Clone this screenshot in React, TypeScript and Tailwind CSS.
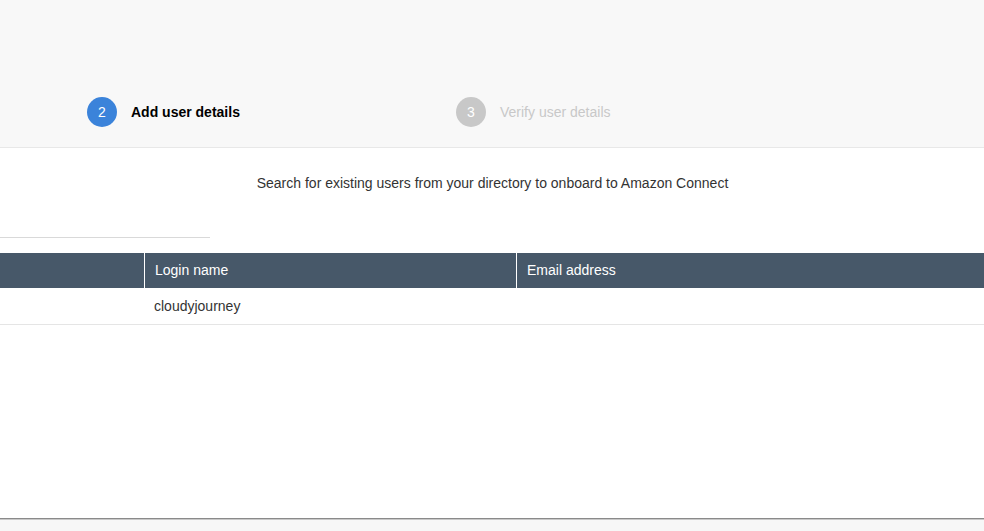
import React from 'react';

const steps = [
  { n: 2, label: 'Add user details', active: true },
  { n: 3, label: 'Verify user details', active: false },
];

export default function App() {
  return (
    <div className="flex h-[531px] w-[984px] flex-col overflow-hidden bg-white font-['Liberation_Sans',Arial,sans-serif] text-[14px]">
      {/* Wizard steps */}
      <div className="h-[148px] shrink-0 border-b border-[#e8e8e8] bg-[#f8f8f8] pt-[97px] pl-[87px]">
        <div className="flex items-center">
          {steps.map(s => (
            <div key={s.n} className={`flex items-center ${s.active ? 'w-[369px]' : ''}`}>
              <div
                className={`flex h-[30px] w-[30px] items-center justify-center rounded-full text-[14px] text-white ${s.active ? 'bg-[#3b83da]' : 'bg-[#c8c8c8]'}`}
              >
                {s.n}
              </div>
              <span className={`ml-[14px] ${s.active ? 'font-bold text-black' : 'text-[#c8c8c8]'}`}>{s.label}</span>
            </div>
          ))}
        </div>
      </div>

      {/* Content */}
      <div className="flex-1">
        <p className="mt-[25px] pl-[1px] text-center text-[#333]">
          Search for existing users from your directory to onboard to Amazon Connect
        </p>
        <div className="mt-[43px] h-px w-[210px] bg-[#d9d9d9]" />

        <div className="mt-[15px]">
          <div className="flex h-[35px] bg-[#475869] text-white">
            <div className="w-[145px] border-r border-white" />
            <div className="flex w-[372px] items-center border-r border-white pl-[10px]">Login name</div>
            <div className="flex flex-1 items-center pl-[10px]">Email address</div>
          </div>
          <div className="flex h-[37px] border-b border-[#e5e5e5] text-[#333]">
            <div className="w-[145px]" />
            <div className="flex w-[372px] items-center pl-[9px]">cloudyjourney</div>
            <div className="flex-1" />
          </div>
        </div>
      </div>

      {/* Footer */}
      <div className="h-[13px] shrink-0 border-t border-[#8a8a8a] bg-[#f7f7f7]">
        <div className="h-px bg-[#c8c8c8]" />
      </div>
    </div>
  );
}
